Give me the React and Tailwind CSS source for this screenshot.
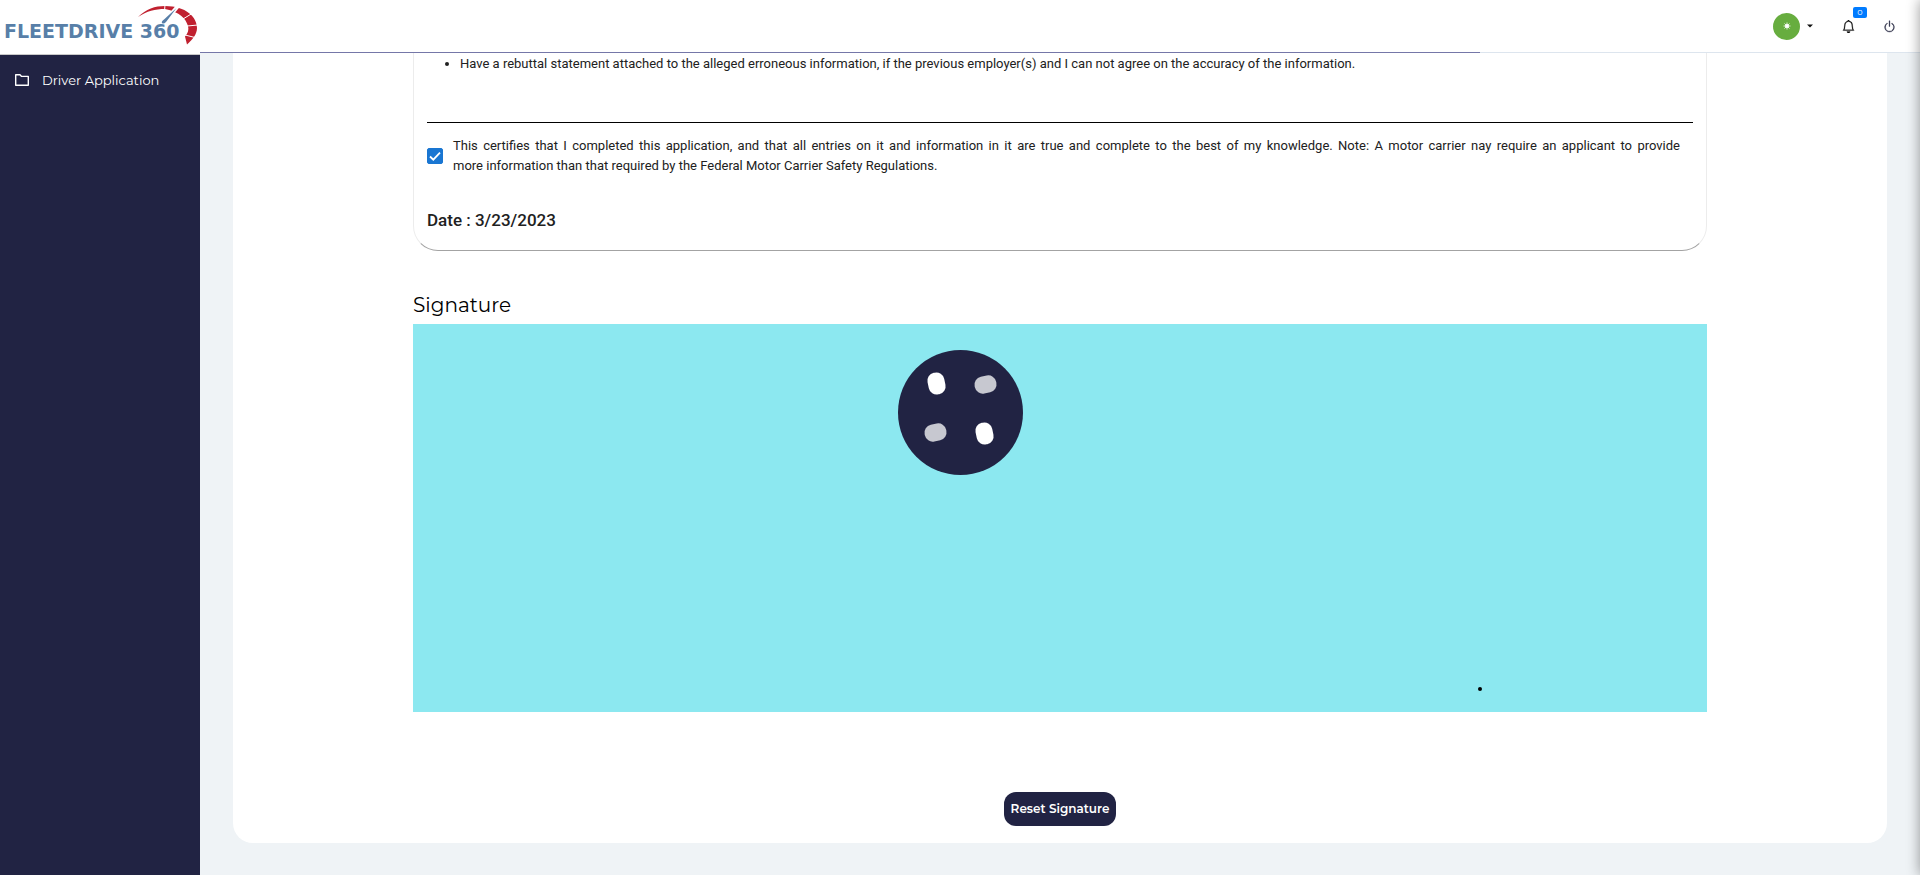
import React from "react";
import { BsBell, BsPower } from "react-icons/bs";

function Logo() {
  return (
    <a href="#" aria-label="Fleetdrive 360" className="relative block h-[55px] border-b border-[#c9c9c9] bg-white">
      <span className="absolute left-1 top-[19px] whitespace-nowrap font-['DejaVu_Sans',sans-serif] text-[19px] font-bold leading-6 text-[#587fa8]">
        FLEETDRIVE 360
      </span>
      <svg className="absolute left-[136px] top-1" width="64" height="42" viewBox="136 4 64 42" aria-hidden="true">
        <path d="M138 17 C146 9 155 6 165 6 L165 9 C155 9 147 11 138 17Z" fill="#c0202f" />
        <path d="M165 6 C186 6 197 17 197 28 C197 34 193 39 187 44.500 L185 36.500 C188 33 189 30 188 26 C186 19 180 12 165 9Z" fill="#c0202f" />
        <path d="M165 5 L164.500 11 M192 13.500 L183 19 M198 25 L187 26 M197 38 L185 35" stroke="#fff" strokeWidth="1" />
        <path d="M178 6 L170 15.500" stroke="#fff" strokeWidth="4" />
        <path d="M176.500 8 L166 22 Q163.500 24.500 162 23 Q161 21.500 164 19.500Z" fill="#587fa8" />
      </svg>
    </a>
  );
}

function FolderIcon() {
  return (
    <svg width="16" height="14" viewBox="0 0 16 14" fill="none" stroke="currentColor" strokeWidth="1.400" aria-hidden="true">
      <path d="M1.700 1.700H6L7.600 3.400H14.300V12.300H1.700Z" strokeLinejoin="round" />
    </svg>
  );
}

function Loader() {
  return (
    <div role="status" aria-label="Loading" className="pointer-events-none fixed inset-x-0 top-[350px] flex justify-center">
      <svg width="125" height="125" viewBox="0 0 125 125">
        <circle cx="62.5" cy="62.5" r="62.5" fill="#212343" />
        <rect x="-8.500" y="-11" width="17" height="22" rx="8" fill="#fff" transform="translate(38.5 33.5) rotate(-12)" />
        <rect x="-8.500" y="-11" width="17" height="22" rx="8" fill="#c7c8d0" transform="translate(87.5 34.5) rotate(78)" />
        <rect x="-8.500" y="-11" width="17" height="22" rx="8" fill="#c7c8d0" transform="translate(37.5 82.5) rotate(78)" />
        <rect x="-8.500" y="-11" width="17" height="22" rx="8" fill="#fff" transform="translate(86.5 83.5) rotate(-12)" />
      </svg>
    </div>
  );
}

export default function App() {
  return (
    <div className="flex h-screen overflow-hidden bg-[#eff3f6] font-['Montserrat','Inter',sans-serif]">
      <aside className="w-[200px] shrink-0 bg-[#212343]">
        <Logo />
        <nav className="px-[14px] py-[15px]">
          <a href="#" className="flex items-center gap-3 text-[13px] leading-5 text-white">
            <FolderIcon />
            Driver Application
          </a>
        </nav>
      </aside>

      <div className="flex min-w-0 flex-1 flex-col">
        <header className="relative flex h-[53px] shrink-0 items-center justify-end border-b border-[#dde5ee] bg-white pr-6">
          <div className="absolute -bottom-px left-0 h-px w-[74.4%] bg-[#7577a8]" />
          <button className="flex items-center gap-[7px]" aria-label="Account">
            <span className="flex size-[27px] items-center justify-center rounded-full bg-[#67ad3f]">
              <svg width="8" height="8" viewBox="0 0 8 8">
                <circle cx="4" cy="4" r="2" fill="#fff" />
                <path d="M4 0.500V7.500M0.500 4H7.500M1.500 1.500L6.500 6.500M6.500 1.500L1.500 6.500" stroke="#fff" strokeWidth="0.800" />
              </svg>
            </span>
            <svg width="6" height="4" viewBox="0 0 6 4"><path d="M0 0.500H6L3 3.500Z" fill="#111" /></svg>
          </button>
          <button className="relative ml-[29px] text-black" aria-label="Notifications">
            <BsBell size={13} strokeWidth={0.3} />
            <span className="absolute -top-[13px] left-[11px] flex h-[11px] w-[14px] items-center justify-center rounded-[2px] bg-[#007bff] text-[8px] leading-none text-white">0</span>
          </button>
          <button className="ml-7 text-[#23243f]" aria-label="Log out">
            <BsPower size={13} strokeWidth={0.4} />
          </button>
        </header>

        <main className="min-h-0 flex-1 overflow-hidden px-[33px] pb-8">
          <div className="flex min-h-full flex-col rounded-b-[20px] bg-white px-[180px]">
            <section className="rounded-b-[25px] border-x border-b border-x-[#ececec] border-b-[#a3a3a3] px-[13px] pb-5 font-['Roboto',sans-serif] text-[13px] leading-5 text-[#212121]">
              <ul className="list-disc pl-[33px] pt-px">
                <li>Have a rebuttal statement attached to the alleged erroneous information, if the previous employer(s) and I can not agree on the accuracy of the information.</li>
              </ul>
              <hr className="mt-12 border-black" />
              <label className="mt-[13px] flex items-center gap-[10px] pr-[13px] text-justify">
                <span className="relative flex size-4 shrink-0">
                  <input type="checkbox" defaultChecked className="peer size-4 appearance-none rounded-[2px] border border-[#1976d2] checked:bg-[#1976d2]" />
                  <svg className="pointer-events-none absolute inset-0 hidden peer-checked:block" width="16" height="16" viewBox="0 0 16 16" fill="none" aria-hidden="true">
                    <path d="M3 8.500L6.300 11.700L13 4.700" stroke="#fff" strokeWidth="1.800" />
                  </svg>
                </span>
                <span>This certifies that I completed this application, and that all entries on it and information in it are true and complete to the best of my knowledge. Note: A motor carrier nay require an applicant to provide more&nbsp;information&nbsp;than that required by the Federal Motor Carrier Safety Regulations.</span>
              </label>
              <p className="mt-[34px] text-[17px] font-medium leading-5">Date : 3/23/2023</p>
            </section>

            <h2 className="mt-[42px] text-[20px] leading-6 text-black">Signature</h2>
            <div className="relative mt-[7px] h-[388px] bg-[#8ce8f0]">
              <span className="absolute bottom-[21px] right-[225px] size-1 rounded-full bg-black" />
            </div>
            <button className="mb-[17px] mt-20 h-[34px] self-center rounded-xl bg-[#212343] px-[7px] text-[12px] font-semibold leading-5 text-white">
              Reset Signature
            </button>
          </div>
        </main>
      </div>

      <Loader />
      <div className="pointer-events-none fixed bottom-0 left-full top-0 w-10 shadow-[0_0_14px_rgba(0,0,0,0.4)]" />
    </div>
  );
}
